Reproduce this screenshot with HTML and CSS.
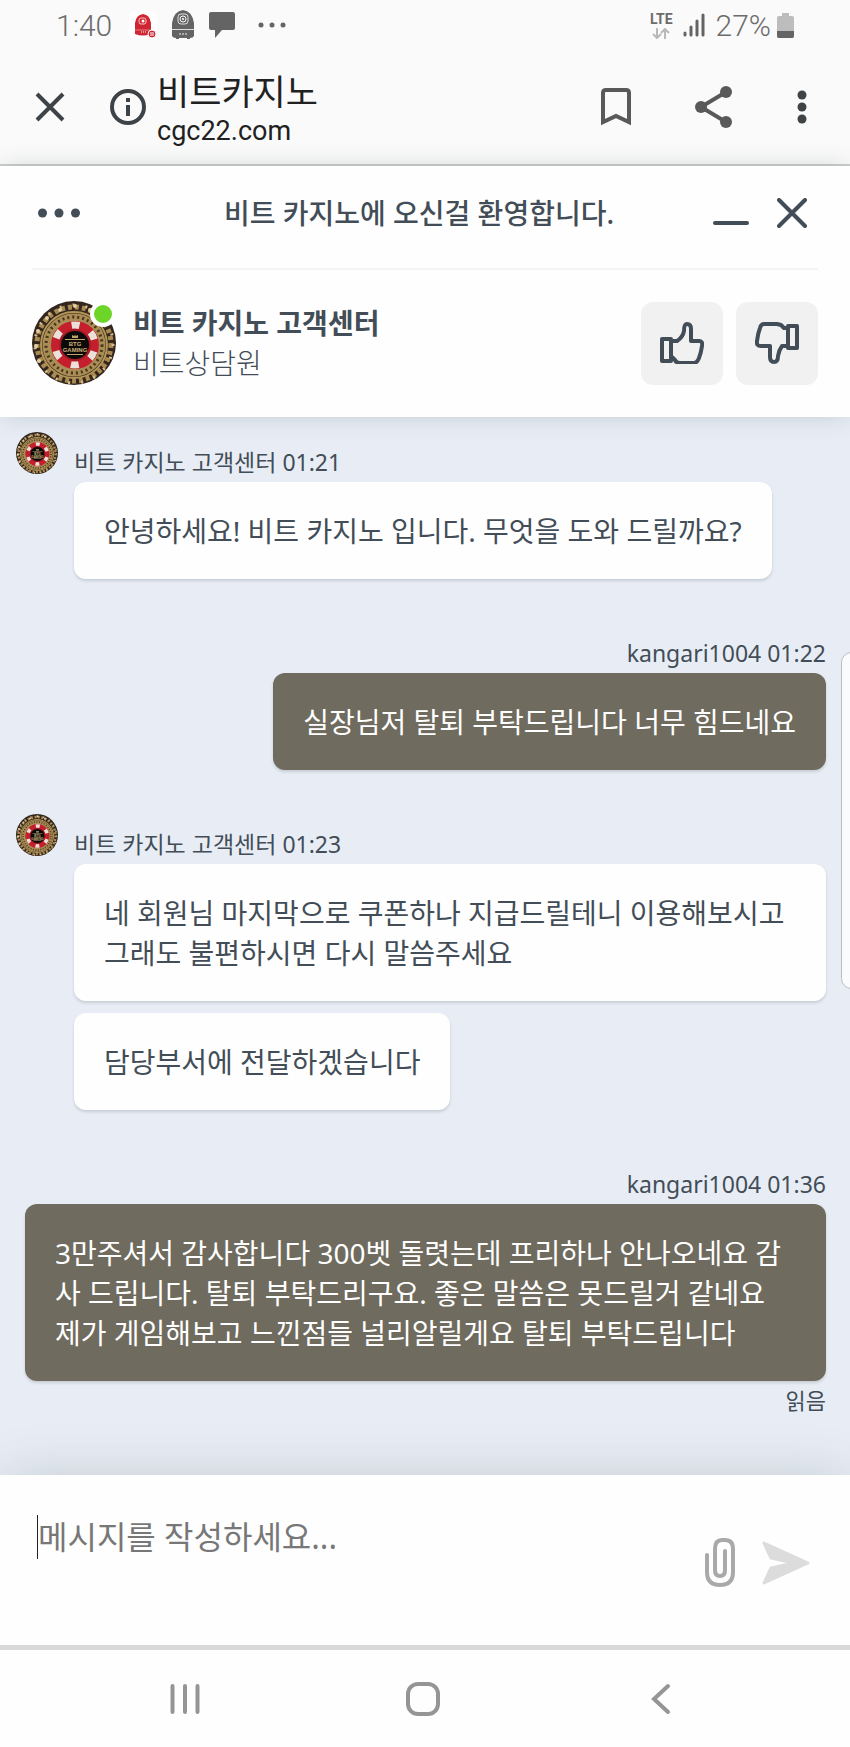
FILE: index.html
```html
<!DOCTYPE html>
<html lang="ko">
<head>
<meta charset="utf-8">
<meta name="viewport" content="width=device-width, initial-scale=1">
<title>비트카지노</title>
<link rel="stylesheet" href="styles.css">
</head>
<body>
<svg class="defs" aria-hidden="true">
  <symbol id="chip" viewBox="0 0 84 84">
    <circle cx="42" cy="42" r="42" fill="#33261d"/>
    <circle cx="42" cy="43" r="37" fill="none" stroke="#a98a52" stroke-width="5" stroke-dasharray="4 3"/>
    <circle cx="42" cy="43" r="39" fill="none" stroke="#d3bd8c" stroke-width="3" stroke-dasharray="2 11"/>
    <circle cx="42" cy="44" r="33" fill="#3b2a1a" stroke="#b49658" stroke-width="2"/>
    <circle cx="42" cy="44" r="27" fill="none" stroke="#a98d55" stroke-width="9"/>
    <circle cx="42" cy="44" r="28" fill="none" stroke="#47351d" stroke-width="3" stroke-dasharray="2 3"/>
    <g fill="#e0cfa4"><circle cx="43" cy="5" r="2"/><circle cx="28" cy="9" r="2"/><circle cx="58" cy="9" r="2"/><circle cx="15" cy="17" r="2"/><circle cx="6" cy="30" r="2"/><circle cx="4" cy="45" r="2"/><circle cx="7" cy="60" r="2"/></g>
    <circle cx="43" cy="44" r="24" fill="#c51f2d"/>
    <circle cx="43" cy="44" r="20" fill="none" stroke="#e9e1da" stroke-width="7" stroke-dasharray="8 12.940" stroke-dashoffset="-6.470"/>
    <circle cx="43" cy="44" r="15" fill="#0b0909" stroke="#a51b25" stroke-width="2"/>
    <path d="M40 37v-3l2 1 1-1 1 1 2-1v3zM33 38h20v1H33zM35 53h16v1H35z" fill="#bfa56b"/>
    <text x="43" y="45" class="chip-text">BTG</text>
    <text x="43" y="51" class="chip-text">GAMING</text>
  </symbol>
</svg>

<div class="status">
  <span class="clock">1:40</span>
  <svg class="s-app" viewBox="0 0 28 28"><rect width="28" height="28" rx="5" fill="#fff"/><path d="M6 23V12q1-8 8-9 7 1 8 9v11q-8 3-16 0z" fill="#cf2634"/><path d="M6 19h16" stroke="#e57b82"/><rect x="10" y="7" width="7" height="6" rx="2" fill="none" stroke="#f6c3c6"/><circle cx="14" cy="10" r="1.5" fill="#fff"/><path d="M12 21h5" stroke="#fff" stroke-dasharray="1 1"/><circle cx="23" cy="23" r="4" fill="#cf2634" stroke="#fff"/><path d="M21 22h4M21 24h4" stroke="#fff"/></svg>
  <svg class="s-bot" viewBox="0 0 24 30"><path d="M1 26V13Q3 1 12 0q9 1 11 13v13q-1 2-4 2v1h-3v-1H8v1H5v-1q-3 0-4-2z" fill="#646464"/><path d="M1 19.500h22" stroke="#ddd"/><rect x="7" y="4" width="10" height="10" rx="3" fill="none" stroke="#ddd"/><circle cx="12" cy="9" r="3" fill="none" stroke="#fff"/><circle cx="12" cy="9" r="1" fill="#fff"/><path d="M8 24h8" stroke="#eee" stroke-dasharray="2 1"/></svg>
  <svg class="s-msg" viewBox="0 0 26 26"><path d="M2 0h22q2 0 2 2v14q0 2-2 2H13l-7 8v-8H2q-2 0-2-2V2q0-2 2-2z" fill="#646464"/></svg>
  <svg class="s-dots" viewBox="0 0 28 6" fill="#646464"><circle cx="3" cy="3" r="2.500"/><circle cx="14" cy="3" r="2.500"/><circle cx="25" cy="3" r="2.500"/></svg>
  <span class="status-end">
    <span class="lte"><span>LTE</span>
      <svg viewBox="0 0 18 11" width="18" height="11" fill="none" stroke="#b9b9b9" stroke-width="2"><path d="M5 0v9M1 6l4 4 4-4M13 11V2M9 5l4-4 4 4"/></svg>
    </span>
    <svg class="s-signal" viewBox="0 0 22 24" stroke="#646464" stroke-width="3" stroke-linecap="round"><path d="M2 20v2M8 14v8M14 8v14M20 2v20"/></svg>
    <span class="percent">27%</span>
    <svg class="s-batt" viewBox="0 0 17 25"><path d="M5 0h7v3h3q2 0 2 2v18q0 2-2 2H2q-2 0-2-2V5q0-2 2-2h3z" fill="#bdbdbd"/><path d="M0 18h17v5q0 2-2 2H2q-2 0-2-2z" fill="#646464"/></svg>
  </span>
</div>

<header class="toolbar">
  <button class="icon-btn tb-close" aria-label="탭 닫기"><svg width="30" height="30" viewBox="0 0 30 30" stroke="#3e4347" stroke-width="4"><path d="M2 2l26 26M28 2L2 28"/></svg></button>
  <button class="icon-btn tb-info" aria-label="사이트 정보"><svg width="36" height="36" viewBox="0 0 36 36"><circle cx="18" cy="18" r="16" fill="none" stroke="#3e4347" stroke-width="4"/><path d="M16 9h4v4h-4zM16 16h4v11h-4z" fill="#3e4347"/></svg></button>
  <div class="site"><h1 class="site-title">비트카지노</h1><span class="site-url">cgc22.com</span></div>
  <div class="tb-actions">
    <button class="icon-btn" aria-label="북마크"><svg width="30" height="38" viewBox="0 0 30 38" fill="none" stroke="#595959" stroke-width="4"><path d="M2 34V5q0-3 3-3h20q3 0 3 3v29l-13-6z"/></svg></button>
    <button class="icon-btn" aria-label="공유"><svg width="38" height="42" viewBox="0 0 38 42" fill="#595959"><path d="M31 6L6 21l25 15" fill="none" stroke="#595959" stroke-width="4"/><circle cx="31" cy="6" r="6"/><circle cx="6" cy="21" r="6"/><circle cx="31" cy="36" r="6"/></svg></button>
    <button class="icon-btn" aria-label="메뉴"><svg width="10" height="34" viewBox="0 0 10 34" fill="#3e4347"><circle cx="5" cy="5" r="4.500"/><circle cx="5" cy="17" r="4.500"/><circle cx="5" cy="29" r="4.500"/></svg></button>
  </div>
</header>

<section class="chat-head">
  <div class="welcome">
    <button class="icon-btn" aria-label="더보기"><svg width="42" height="10" viewBox="0 0 42 10" fill="#424d57"><circle cx="4.500" cy="5" r="4.500"/><circle cx="21" cy="5" r="4.500"/><circle cx="37.500" cy="5" r="4.500"/></svg></button>
    <h2 class="welcome-title">비트 카지노에 오신걸 환영합니다.</h2>
    <div class="win-btns">
      <button class="icon-btn" aria-label="최소화"><svg width="36" height="30" viewBox="0 0 36 30" stroke="#424d57" stroke-width="4" stroke-linecap="round"><path d="M2 25h32"/></svg></button>
      <button class="icon-btn" aria-label="닫기"><svg width="30" height="30" viewBox="0 0 30 30" stroke="#424d57" stroke-width="4" stroke-linecap="round"><path d="M2 2l26 26M28 2L2 28"/></svg></button>
    </div>
  </div>
  <div class="agent">
    <div class="agent-pic"><svg class="avatar-lg" role="img" aria-label="비트 카지노"><use href="#chip"/></svg><span class="online"></span></div>
    <div class="agent-text"><strong class="agent-name">비트 카지노 고객센터</strong><span class="agent-role">비트상담원</span></div>
    <div class="rate">
      <button class="rate-btn" aria-label="좋아요"><svg width="44" height="42" viewBox="0 0 44 42" fill="none" stroke="#424d57" stroke-width="4" stroke-linejoin="round"><path d="M2 17h9v22H2zM12 19h5q6-4 7-10 0-7 3-7 4 0 4 5v12h8q4 0 3 5-1 7-3 12-2 5-5 5H20q-4 0-5-3l-3-3"/></svg></button>
      <button class="rate-btn" aria-label="싫어요"><svg width="44" height="42" viewBox="0 0 44 42" fill="none" stroke="#424d57" stroke-width="4" stroke-linejoin="round"><path d="M42 4h-9v22h9zM32 6h-3l-3-3-4-1H9Q6 2 5 6 3 11 2 19q-1 5 4 5h9v11q0 5 4 5t4-6q1-6 4-10h5"/></svg></button>
    </div>
  </div>
</section>

<main class="chat">
  <article class="msg">
    <svg class="avatar-sm" aria-hidden="true"><use href="#chip"/></svg>
    <div class="stack"><div class="meta">비트 카지노 고객센터 01:21</div>
      <p class="bubble">안녕하세요! 비트 카지노 입니다. 무엇을 도와 드릴까요?</p></div>
  </article>
  <article class="msg own">
    <div class="stack"><div class="meta">kangari1004 01:22</div>
      <p class="bubble">실장님저 탈퇴 부탁드립니다 너무 힘드네요</p></div>
  </article>
  <article class="msg">
    <svg class="avatar-sm" aria-hidden="true"><use href="#chip"/></svg>
    <div class="stack"><div class="meta">비트 카지노 고객센터 01:23</div>
      <p class="bubble">네 회원님 마지막으로 쿠폰하나 지급드릴테니 이용해보시고 그래도 불편하시면 다시 말씀주세요</p>
      <p class="bubble">담당부서에 전달하겠습니다</p></div>
  </article>
  <article class="msg own">
    <div class="stack"><div class="meta">kangari1004 01:36</div>
      <p class="bubble">3만주셔서 감사합니다 300벳 돌렷는데 프리하나 안나오네요 감사 드립니다. 탈퇴 부탁드리구요. 좋은 말씀은 못드릴거 같네요<br>제가 게임해보고 느낀점들 널리알릴게요 탈퇴 부탁드립니다</p>
      <div class="read">읽음</div></div>
  </article>
</main>

<form class="composer">
  <span class="caret"></span>
  <textarea class="field" rows="2" aria-label="메시지" placeholder="메시지를 작성하세요..."></textarea>
  <div class="send-row">
    <button type="button" class="icon-btn" aria-label="파일 첨부"><svg width="30" height="49" viewBox="0 0 30 49" fill="none" stroke="#a9a9a9" stroke-width="4" stroke-linecap="round"><path d="M2 17v17q0 13 13 13t13-13V11q0-9-8-9h-3q-7 0-7 9v21q0 6 5 6t5-6V13"/></svg></button>
    <button type="button" class="icon-btn" aria-label="보내기"><svg width="48" height="44" viewBox="0 0 48 44" fill="#dcdcdc" stroke="#dcdcdc" stroke-width="3" stroke-linejoin="round"><path d="M2 2l44 20L2 42l7-15 23-5L9 17z"/></svg></button>
  </div>
</form>

<nav class="sysnav">
  <button class="icon-btn" aria-label="최근 앱"><svg width="30" height="32" viewBox="0 0 30 32" stroke="#959595" stroke-width="4" stroke-linecap="round"><path d="M2.500 3v26M15 3v26M27.500 3v26"/></svg></button>
  <button class="icon-btn" aria-label="홈"><svg width="34" height="34" viewBox="0 0 34 34" fill="none" stroke="#959595" stroke-width="4"><rect x="2" y="2" width="30" height="30" rx="10"/></svg></button>
  <button class="icon-btn" aria-label="뒤로"><svg width="20" height="32" viewBox="0 0 20 32" fill="none" stroke="#959595" stroke-width="4" stroke-linecap="round"><path d="M17 3L3 16l14 13"/></svg></button>
</nav>
<aside class="edge-panel"></aside>
</body>
</html>
```

FILE: styles.css
```css
* { box-sizing: border-box; }

body {
  margin: 0;
  min-height: 100vh;
  display: flex;
  flex-direction: column;
  overflow-x: hidden;
  position: relative;
  background: #fefefe;
  color: #424d57;
  font-family: "Noto Sans", "Noto Sans CJK KR", sans-serif;
}

h1, h2, p { margin: 0; }
svg { display: block; flex: none; }
.defs { display: none; }

.icon-btn {
  display: flex;
  padding: 0;
  border: 0;
  background: none;
}

/* Status bar */
.status {
  display: flex;
  align-items: center;
  height: 50px;
  padding: 0 56px 0 56px;
  background: #fafafa;
  color: #6c6c6c;
  font-family: Roboto, sans-serif;
  font-size: 30px;
  font-weight: 300;
}
.clock { margin-right: 17px; }
.s-app { width: 28px; height: 28px; margin-right: 14px; }
.s-bot { width: 24px; height: 30px; margin-right: 14px; }
.s-msg { width: 26px; height: 26px; margin-right: 23px; }
.s-dots { width: 28px; height: 6px; }
.status-end { display: flex; align-items: center; margin-left: auto; }
.lte {
  display: flex;
  flex-direction: column;
  align-items: center;
  gap: 2px;
  margin-right: 10px;
  font-size: 14px;
  line-height: 14px;
  font-weight: 700;
}
.s-signal { width: 22px; height: 24px; margin-right: 11px; }
.s-batt { width: 17px; height: 25px; margin-left: 6px; }

/* Browser toolbar */
.toolbar {
  display: flex;
  align-items: center;
  height: 116px;
  padding: 0 43px 0 35px;
  background: #fafafa;
  border-bottom: 2px solid #cdcdcd;
  color: #212121;
}
.tb-close { margin-right: 45px; }
.tb-info { margin-right: 11px; }
.site { display: flex; flex-direction: column; padding-top: 4px; }
.site-title { font-size: 35px; line-height: 43px; font-weight: 400; }
.site-url { font-family: Roboto, sans-serif; font-size: 27px; line-height: 36px; }
.tb-actions { display: flex; align-items: center; gap: 64px; margin-left: auto; }

/* Chat header */
.chat-head {
  position: relative;
  z-index: 1;
  padding: 0 32px;
  background: #fefefe;
  box-shadow: 0 0 24px -4px rgba(60, 75, 75, .28);
}
.welcome {
  display: grid;
  grid-template-columns: 104px 1fr 116px;
  align-items: center;
  height: 104px;
  padding: 0 6px;
  padding-bottom: 8px;
  border-bottom: 2px solid #f4f4f4;
}
.welcome-title { text-align: center; font-size: 28px; line-height: 40px; font-weight: 500; }
.win-btns { display: flex; justify-content: flex-end; gap: 28px; padding-right: 5px; }
.agent { display: flex; align-items: center; padding: 31px 0 32px; }
.agent-pic { position: relative; margin-right: 17px; }
.avatar-lg { width: 84px; height: 84px; }
.chip-text { font: 700 6px "Liberation Sans", sans-serif; fill: #cdb376; text-anchor: middle; }
.online {
  position: absolute;
  top: 0;
  right: 0;
  width: 26px;
  height: 26px;
  border: 4px solid #fefefe;
  border-radius: 50%;
  background: #6dd528;
}
.agent-text { display: flex; flex-direction: column; font-size: 28px; line-height: 40px; }
.agent-name { font-weight: 600; }
.agent-role { font-weight: 300; }
.rate { display: flex; gap: 13px; margin-left: auto; }
.rate-btn {
  display: flex;
  align-items: center;
  justify-content: center;
  width: 82px;
  height: 83px;
  padding: 0;
  border: 0;
  border-radius: 12px;
  background: #f1f1f1;
}

/* Conversation */
.chat {
  flex: 1;
  display: flex;
  flex-direction: column;
  gap: 44px;
  padding: 15px 24px 40px 16px;
  background: #e8edf5;
}
.msg { display: flex; align-items: flex-start; gap: 16px; }
.avatar-sm { width: 42px; height: 42px; }
.stack { display: flex; flex-direction: column; align-items: flex-start; min-width: 0; }
.own { padding-left: 9px; justify-content: flex-end; }
.own .stack { align-items: flex-end; }
.meta { padding: 13px 0 2px; font-size: 23px; line-height: 35px; }
.bubble {
  padding: 29px 30px 28px;
  border-radius: 12px;
  background: #fefefe;
  box-shadow: 0 2px 3px rgba(50, 60, 70, .18);
  font-size: 28px;
  line-height: 40px;
}
.bubble + .bubble { margin-top: 12px; }
.own .bubble { background: #6f6b5e; color: #fff; }
.read { padding-top: 3px; font-size: 22px; line-height: 32px; }

/* Message box */
.composer {
  position: relative;
  z-index: 1;
  display: flex;
  align-items: flex-start;
  height: 175px;
  padding: 40px 40px 0 37px;
  background: #fefefe;
  border-bottom: 5px solid #d9d9d9;
  box-shadow: 0 0 50px -4px rgba(60, 75, 75, .22);
}
.caret { width: 1px; height: 44px; background: #222; }
.field {
  flex: 1;
  min-width: 0;
  padding: 0;
  border: 0;
  outline: 0;
  resize: none;
  background: none;
  color: #424d57;
  font: inherit;
  font-size: 32px;
  line-height: 44px;
}
.field::placeholder { color: #777; opacity: 1; }
.send-row { display: flex; align-items: center; gap: 27px; padding-top: 23px; }

/* System navigation */
.sysnav {
  position: relative;
  z-index: 2;
  display: grid;
  grid-template-columns: repeat(3, 1fr);
  place-items: center;
  height: 97px;
  padding: 0 70px 0 66px;
  background: #fefefe;
}

/* Edge handle floats over the conversation */
.edge-panel {
  position: absolute;
  z-index: 3;
  top: 652px;
  right: -12px;
  width: 21px;
  height: 337px;
  border: 1px solid #b9bcc0;
  border-radius: 12px;
  background: #fafbfc;
}
```
